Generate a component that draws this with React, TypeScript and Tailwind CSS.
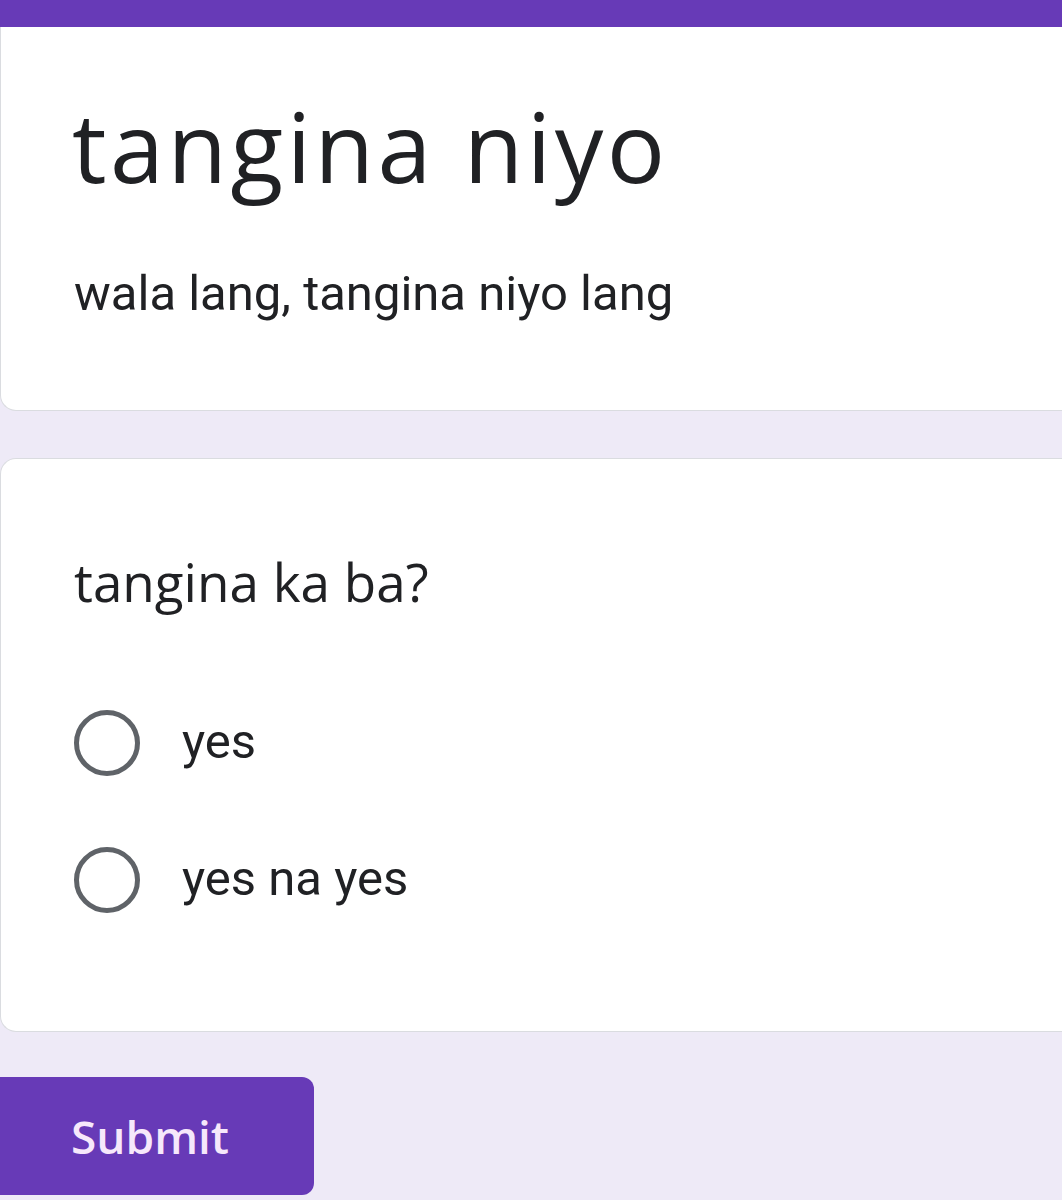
export default function App() {
  return (
    <div className="min-h-[1200px] bg-[#eeeaf7] overflow-hidden" style={{ fontFamily: 'Roboto, "Open Sans", sans-serif' }}>
      <div className="h-[27px] bg-[#673ab7]" />

      <div className="bg-white border-b border-l border-[#dadce0] rounded-bl-2xl h-[384px] pl-[71px] pt-[70px]">
        <h1 className="text-[97px] leading-none text-[#202124] tracking-[3.5px]" style={{ fontFamily: '"Open Sans", Roboto, sans-serif' }}>
          tangina niyo
        </h1>
        <p className="mt-[75px] text-[49px] leading-none text-[#202124] pl-[2px]">wala lang, tangina niyo lang</p>
      </div>

      <div className="mt-[47px] bg-white border-y border-l border-[#dadce0] rounded-l-2xl h-[574px] pl-[73px] pt-[96px]">
        <p className="text-[53px] leading-none text-[#202124]" style={{ fontFamily: '"Open Sans", Roboto, sans-serif' }}>
          tangina ka ba?
        </p>
        <div className="mt-[102px] flex flex-col gap-[71px]">
          {['yes', 'yes na yes'].map((opt) => (
            <div key={opt} className="flex items-center gap-[42px]">
              <div className="w-[66px] h-[66px] rounded-full border-[5px] border-[#5f6368] shrink-0" />
              <span className="text-[49px] leading-none text-[#202124] -mt-[4px]">{opt}</span>
            </div>
          ))}
        </div>
      </div>

      <div className="mt-[45px] w-[314px] h-[118px] bg-[#673ab7] rounded-r-xl flex items-center pl-[71px]">
        <span className="text-[46px] font-semibold text-[#f6e8fb]" style={{ fontFamily: '"Open Sans", Roboto, sans-serif' }}>
          Submit
        </span>
      </div>
    </div>
  );
}
